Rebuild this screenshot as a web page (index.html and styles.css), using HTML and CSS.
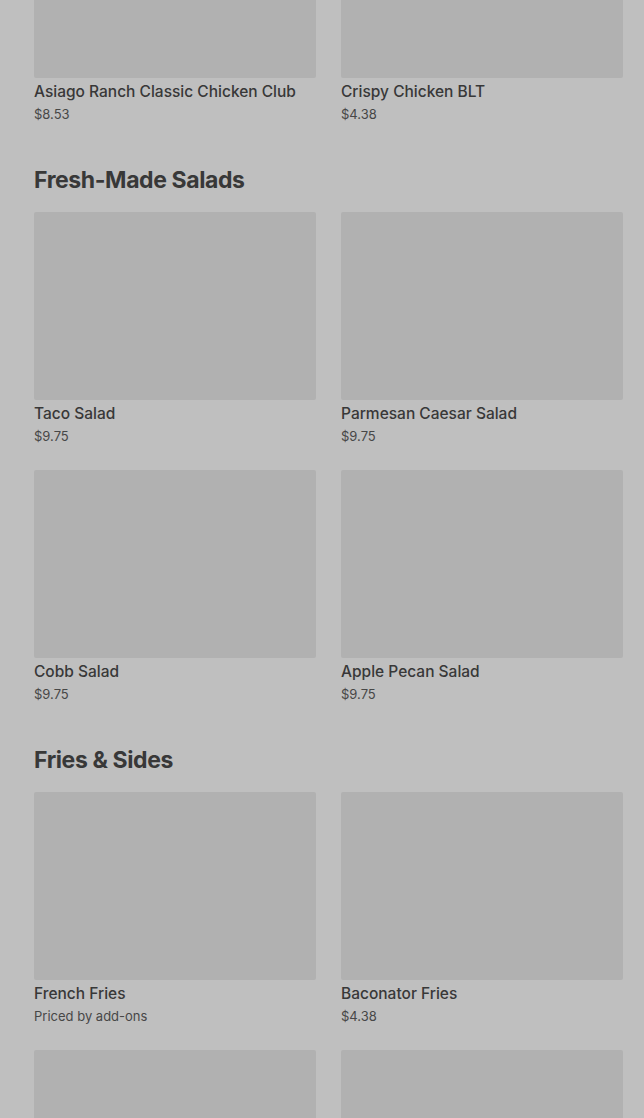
FILE: index.html
```html
<!DOCTYPE html>
<html>
<head>
  <title>Menu</title>
  <link rel="stylesheet" href="styles.css">
</head>
<body>
  <div class="menu">
    <section class="menu__section">
      <div class="menu__grid">
        <div class="item">
          <div class="item__img"></div>
          <div class="item__name">Asiago Ranch Classic Chicken Club</div>
          <div class="item__price">$8.53</div>
        </div>
        <div class="item">
          <div class="item__img"></div>
          <div class="item__name">Crispy Chicken BLT</div>
          <div class="item__price">$4.38</div>
        </div>
      </div>
    </section>

    <section class="menu__section">
      <h2 class="menu__title">Fresh-Made Salads</h2>
      <div class="menu__grid">
        <div class="item">
          <div class="item__img"></div>
          <div class="item__name">Taco Salad</div>
          <div class="item__price">$9.75</div>
        </div>
        <div class="item">
          <div class="item__img"></div>
          <div class="item__name">Parmesan Caesar Salad</div>
          <div class="item__price">$9.75</div>
        </div>
        <div class="item">
          <div class="item__img"></div>
          <div class="item__name">Cobb Salad</div>
          <div class="item__price">$9.75</div>
        </div>
        <div class="item">
          <div class="item__img"></div>
          <div class="item__name">Apple Pecan Salad</div>
          <div class="item__price">$9.75</div>
        </div>
      </div>
    </section>

    <section class="menu__section">
      <h2 class="menu__title">Fries &amp; Sides</h2>
      <div class="menu__grid">
        <div class="item">
          <div class="item__img"></div>
          <div class="item__name">French Fries</div>
          <div class="item__price">Priced by add-ons</div>
        </div>
        <div class="item">
          <div class="item__img"></div>
          <div class="item__name">Baconator Fries</div>
          <div class="item__price">$4.38</div>
        </div>
        <!-- next row, only the tops of the pictures are in view -->
        <div class="item">
          <div class="item__img"></div>
        </div>
        <div class="item">
          <div class="item__img"></div>
        </div>
      </div>
    </section>
  </div>
</body>
</html>
```

FILE: styles.css
```css
html, body {
  margin: 0;
  padding: 0;
  background-color: #bfbfbf;
  overflow: hidden;
}

body {
  font-family: Inter, 'Liberation Sans', sans-serif;
  color: #383838;
}

/* page is scrolled a little into the list */
.menu {
  margin-top: -110px;
  padding: 0 20px 0 34px;
}

.menu__section {
  margin-bottom: 40px;
}

.menu__title {
  margin: 0 0 16px;
  font-size: 23px;
  line-height: 32px;
  font-weight: 700;
  letter-spacing: -0.4px;
  color: #383838;
}

.menu__grid {
  display: grid;
  grid-template-columns: 282px 282px;
  column-gap: 25px;
  row-gap: 24px;
}

.item__img {
  height: 188px;
  background-color: #b1b1b1;
  border-radius: 2px;
}

.item__name {
  margin-top: 4px;
  font-size: 15.5px;
  line-height: 20px;
  font-weight: 500;
  color: #383838;
}

.item__price {
  margin-top: 2px;
  font-size: 13px;
  line-height: 20px;
  color: #474747;
}
```
